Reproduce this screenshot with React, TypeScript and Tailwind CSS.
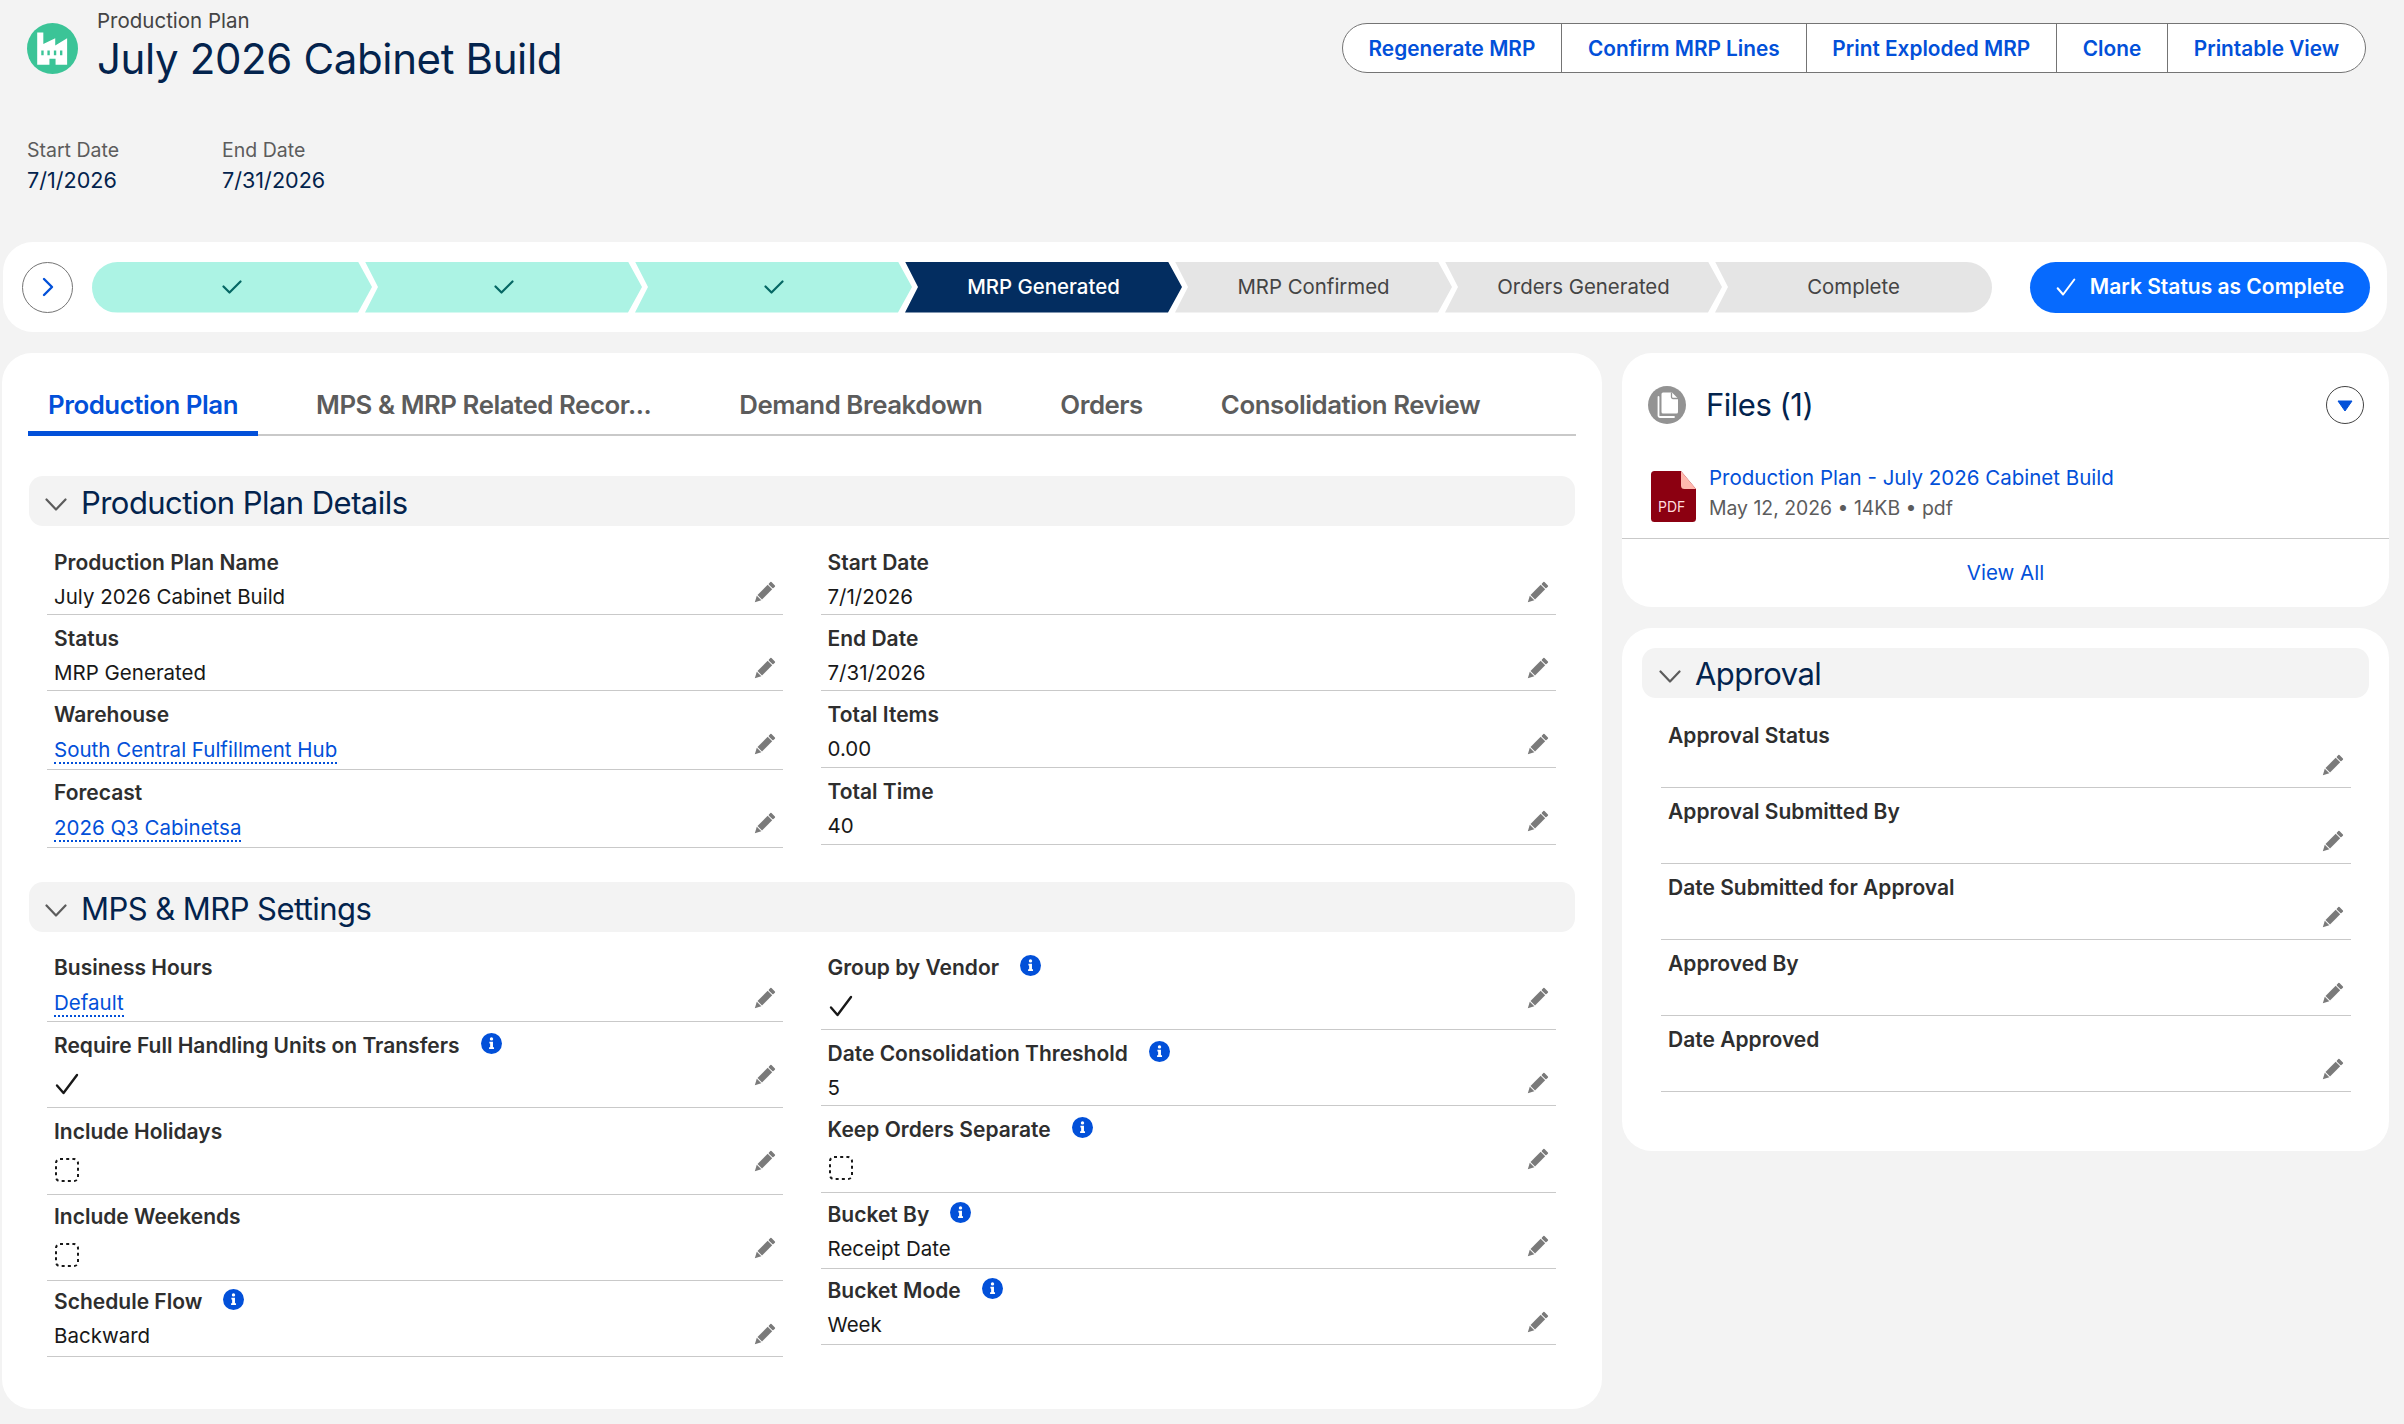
import type { ReactNode } from "react";

type Kind = "text" | "link" | "check" | "empty";

type FieldRow = {
  label: string;
  value?: string;
  kind?: Kind;
  info?: boolean;
  h: string;
  // some labels sit a little higher in their row
  lift?: string;
};

const detailsLeft: FieldRow[] = [
  { label: "Production Plan Name", value: "July 2026 Cabinet Build", h: "h-[76px]" },
  { label: "Status", value: "MRP Generated", h: "h-[76px]" },
  { label: "Warehouse", value: "South Central Fulfillment Hub", kind: "link", h: "h-[79px]" },
  { label: "Forecast", value: "2026 Q3 Cabinetsa", kind: "link", h: "h-[78px]", lift: "-mt-px mb-px" },
];

const detailsRight: FieldRow[] = [
  { label: "Start Date", value: "7/1/2026", h: "h-[76px]" },
  { label: "End Date", value: "7/31/2026", h: "h-[76px]" },
  { label: "Total Items", value: "0.00", h: "h-[77px]" },
  { label: "Total Time", value: "40", h: "h-[77px]" },
];

const settingsLeft: FieldRow[] = [
  { label: "Business Hours", value: "Default", kind: "link", h: "h-[77px]", lift: "-mt-px mb-px" },
  { label: "Require Full Handling Units on Transfers", kind: "check", info: true, h: "h-[86px]" },
  { label: "Include Holidays", kind: "empty", h: "h-[87px]" },
  { label: "Include Weekends", kind: "empty", h: "h-[86px]", lift: "-mt-[2px] mb-[2px]" },
  { label: "Schedule Flow", value: "Backward", info: true, h: "h-[76px]", lift: "-mt-[3px] mb-[1px]" },
];

const settingsRight: FieldRow[] = [
  { label: "Group by Vendor", kind: "check", info: true, h: "h-[85px]", lift: "-mt-px mb-px" },
  { label: "Date Consolidation Threshold", value: "5", info: true, h: "h-[76px]" },
  { label: "Keep Orders Separate", kind: "empty", info: true, h: "h-[87px]" },
  { label: "Bucket By", value: "Receipt Date", info: true, h: "h-[76px]", lift: "-mt-[2px] mb-[2px]" },
  { label: "Bucket Mode", value: "Week", info: true, h: "h-[76px]", lift: "-mt-[2px] mb-[2px]" },
];

const approvalRows = [
  "Approval Status",
  "Approval Submitted By",
  "Date Submitted for Approval",
  "Approved By",
  "Date Approved",
];

const actions = ["Regenerate MRP", "Confirm MRP Lines", "Print Exploded MRP", "Clone", "Printable View"];

const tabs = ["Production Plan", "MPS & MRP Related Recor...", "Demand Breakdown", "Orders", "Consolidation Review"];

function PencilIcon() {
  return (
    <svg viewBox="0 0 24 24" className="h-[24px] w-[24px] shrink-0 fill-[#7a7a7a]">
      <g transform="rotate(45 12 12)">
        <rect x="8.8" y="-1" width="6.4" height="3.6" rx="0.8" />
        <rect x="8.8" y="3.6" width="6.4" height="14.4" />
        <path d="M8.8 19h6.4L12 25z" />
      </g>
    </svg>
  );
}

function InfoIcon() {
  return (
    <svg viewBox="0 0 20 20" className="-mt-[5px] h-[21px] w-[21px] shrink-0">
      <circle cx="10" cy="10" r="10" fill="#0250d9" />
      <circle cx="10" cy="5.6" r="1.6" fill="#fff" />
      <path d="M8 8.4h3.4v5.2h1v1.6H7.7v-1.6h1v-3.6H8z" fill="#fff" />
    </svg>
  );
}

function CheckIcon({ className }: { className: string }) {
  return (
    <svg viewBox="0 0 24 24" fill="none" strokeLinecap="round" strokeLinejoin="round" className={className}>
      <path d="M2 13.5 8.5 21 22 3" stroke="currentColor" strokeWidth="2.4" />
    </svg>
  );
}

function PathCheck() {
  return (
    <svg viewBox="0 0 20 14" fill="none" className="h-[14px] w-[20px]">
      <path d="M1.500 6.500 7.500 12.500 18.500 1.500" stroke="#056764" strokeWidth="2.200" strokeLinecap="round" strokeLinejoin="round" />
    </svg>
  );
}

function DashedBox() {
  return (
    <svg viewBox="0 0 24 24" fill="none" className="ml-px h-[24px] w-[24px]">
      <rect x="1" y="1" width="22" height="22" rx="4" stroke="#181818" strokeWidth="2" strokeDasharray="3 3.200" />
    </svg>
  );
}

function ChevronDown() {
  return (
    <svg viewBox="0 0 22 13" fill="none" className="mt-[7px] h-[13px] w-[22px] shrink-0">
      <path d="M1.500 1.500 11 11.500l9.500-10" stroke="#5c5c5c" strokeWidth="2.200" strokeLinecap="round" strokeLinejoin="round" />
    </svg>
  );
}

function FactoryIcon() {
  return (
    <svg viewBox="0 0 150 150" className="mt-[14px] h-[51px] w-[51px] shrink-0">
      <circle cx="75" cy="75" r="75" fill="#3bc497" />
      <path
        fillRule="evenodd"
        fill="#fff"
        d="M30 28h18v34l35-17v21l35-21v78H84v-18H66v18H30zM42 81v14h7V81zM60 81v14h7V81zM79 81v14h7V81zM97 81v14h7V81z"
      />
    </svg>
  );
}

function FilesIcon() {
  return (
    <svg viewBox="0 0 38 38" className="h-[38px] w-[38px] shrink-0">
      <circle cx="19" cy="19" r="19" fill="#939393" />
      <path d="M15 6.500h9l6 6v13.500a1.500 1.500 0 0 1-1.500 1.500H15a1.500 1.500 0 0 1-1.500-1.500V8a1.500 1.500 0 0 1 1.500-1.500z" fill="#fff" />
      <path d="M23.500 6.500v4.500a1.500 1.500 0 0 0 1.500 1.500h5" fill="none" stroke="#939393" strokeWidth="1.300" />
      <path d="M10.500 11v18.500a1.500 1.500 0 0 0 1.500 1.500h14" fill="none" stroke="#fff" strokeWidth="1.800" strokeLinecap="round" />
    </svg>
  );
}

function PdfIcon() {
  return (
    <svg viewBox="0 0 45 51" className="h-[51px] w-[45px] shrink-0">
      <path d="M3.500 0H30l15 18v29.500a3.500 3.500 0 0 1-3.500 3.500h-38A3.500 3.500 0 0 1 0 47.500v-44A3.500 3.500 0 0 1 3.500 0z" fill="#8c0011" />
      <path d="M30 0l15 18H33.500a3.500 3.500 0 0 1-3.500-3.500z" fill="#ffb8ae" />
      <text x="7" y="41" fill="#ffdcdc" fontSize="14" fontFamily="Inter, sans-serif">
        PDF
      </text>
    </svg>
  );
}

function SectionHeader({ title }: { title: string }) {
  return (
    <div className="flex h-[50px] items-center gap-[14px] rounded-[14px] bg-[#f3f3f3] pl-[16px]">
      <ChevronDown />
      <h2 className="pt-[3px] text-[31px] leading-[40px] tracking-[-0.55px] text-[#03234d]">{title}</h2>
    </div>
  );
}

function FieldValue({ row }: { row: FieldRow }) {
  if (row.kind === "check") {
    return (
      <div className="ml-px mt-[15px] h-[24px] text-[#181818]">
        <CheckIcon className="h-[24px] w-[24px]" />
      </div>
    );
  }
  if (row.kind === "empty") {
    return (
      <div className="mt-[15px] h-[24px]">
        <DashedBox />
      </div>
    );
  }
  if (row.kind === "link") {
    return (
      <div className="mt-[12px] h-[24px] text-[20.5px] leading-[24px]">
        <span className="border-b-2 border-dotted border-[#0250d9] text-[#0250d9]">{row.value}</span>
      </div>
    );
  }
  return <div className="mt-[11px] h-[24px] text-[20.5px] leading-[24px] text-[#181818]">{row.value}</div>;
}

function Field({ row }: { row: FieldRow }) {
  return (
    <div className={`flex justify-between border-b-[1.5px] border-[#c9c9c9] pl-[7px] pr-[7px] pt-[13px] ${row.h}`}>
      <div className="min-w-0">
        <div className={`flex h-[22px] items-center gap-[21px] text-[21px] font-semibold leading-[22px] text-[#2e2e2e] ${row.lift ?? ""}`}>
          <span>{row.label}</span>
          {row.info ? <InfoIcon /> : null}
        </div>
        <FieldValue row={row} />
      </div>
      <div className="mt-[29px]">
        <PencilIcon />
      </div>
    </div>
  );
}

function Section({ title, left, right }: { title: string; left: FieldRow[]; right: FieldRow[] }) {
  return (
    <section>
      <SectionHeader title={title} />
      <div className="ml-[18px] mr-[19px] mt-[13px] grid grid-cols-2 items-start gap-x-[38px]">
        <div>
          {left.map((row) => (
            <Field key={row.label} row={row} />
          ))}
        </div>
        <div>
          {right.map((row) => (
            <Field key={row.label} row={row} />
          ))}
        </div>
      </div>
    </section>
  );
}

function Step({ children, className, width }: { children: ReactNode; className: string; width: string }) {
  return <div className={`flex h-[51px] items-center justify-center text-[20.4px] ${width} ${className}`}>{children}</div>;
}

const midClip = "[clip-path:polygon(0_0,calc(100%-14px)_0,100%_50%,calc(100%-14px)_100%,0_100%,13px_50%)]";

function PathBar() {
  return (
    <div className="flex min-w-0 flex-1">
      <Step width="w-[280px] shrink-0" className="rounded-l-full bg-[#acf3e4] [clip-path:polygon(0_0,calc(100%-14px)_0,100%_50%,calc(100%-14px)_100%,0_100%)]">
        <PathCheck />
      </Step>
      <Step width="-ml-[7px] flex-1" className={`bg-[#acf3e4] ${midClip}`}>
        <PathCheck />
      </Step>
      <Step width="-ml-[7px] flex-1" className={`bg-[#acf3e4] ${midClip}`}>
        <PathCheck />
      </Step>
      <Step width="-ml-[7px] flex-1" className={`bg-[#032d60] font-medium text-white ${midClip}`}>
        MRP Generated
      </Step>
      <Step width="-ml-[7px] flex-1" className={`bg-[#e5e5e5] text-[#444444] ${midClip}`}>
        MRP Confirmed
      </Step>
      <Step width="-ml-[7px] flex-1" className={`bg-[#e5e5e5] text-[#444444] ${midClip}`}>
        Orders Generated
      </Step>
      <Step
        width="-ml-[7px] flex-1"
        className="rounded-r-full bg-[#e5e5e5] text-[#444444] [clip-path:polygon(0_0,100%_0,100%_100%,0_100%,13px_50%)]"
      >
        Complete
      </Step>
    </div>
  );
}

export default function App() {
  return (
    <div className="h-[1424px] w-[2404px] overflow-hidden bg-[#f3f3f3] font-['Inter',sans-serif] antialiased">
      {/* page header */}
      <header className="px-[27px] pt-[9px]">
        <div className="flex items-start justify-between pr-[11px]">
          <div className="flex items-start gap-[19px]">
            <FactoryIcon />
            <div>
              <div className="text-[20.5px] leading-[24px] text-[#444444]">Production Plan</div>
              <h1 className="pt-[1px] text-[42px] leading-[50px] tracking-[-0.37px] text-[#03234d]">July 2026 Cabinet Build</h1>
            </div>
          </div>
          <div className="mt-[14px] flex h-[50px] rounded-full border-[1.5px] border-[#747474] bg-white">
            {actions.map((a, i) => (
              <button
                key={a}
                type="button"
                className={`px-[25.8px] pt-[1px] text-[20.8px] font-semibold text-[#0250d9] ${i > 0 ? "border-l-[1.5px] border-[#747474]" : ""}`}
              >
                {a}
              </button>
            ))}
          </div>
        </div>
        <div className="mt-[54px] flex">
          <div className="w-[195px]">
            <div className="text-[19.5px] leading-[24px] text-[#5c5c5c]">Start Date</div>
            <div className="mt-[4px] text-[21.6px] leading-[28px] text-[#03234d]">7/1/2026</div>
          </div>
          <div>
            <div className="text-[19.5px] leading-[24px] text-[#5c5c5c]">End Date</div>
            <div className="mt-[4px] text-[21.6px] leading-[28px] text-[#03234d]">7/31/2026</div>
          </div>
        </div>
      </header>

      {/* status path */}
      <div className="ml-[3px] mt-[48px] flex h-[90px] w-[2384px] items-center rounded-[30px] bg-white pl-[19px] pr-[17px]">
        <span className="flex h-[51px] w-[51px] shrink-0 items-center justify-center rounded-full border-[1.5px] border-[#747474]">
          <svg viewBox="0 0 12 20" fill="none" className="h-[20px] w-[12px]">
            <path d="M2 2l8 8-8 8" stroke="#0250d9" strokeWidth="2.400" strokeLinecap="round" strokeLinejoin="round" />
          </svg>
        </span>
        <div className="ml-[19px] flex min-w-0 flex-1">
          <PathBar />
        </div>
        <button
          type="button"
          className="ml-[38px] flex h-[51px] w-[340px] shrink-0 items-center justify-center gap-[14px] rounded-full bg-[#066afe] text-[21px] font-semibold text-white"
        >
          <CheckIcon className="h-[20px] w-[20px]" />
          Mark Status as Complete
        </button>
      </div>

      <div className="ml-[2px] mt-[21px] flex items-start gap-[20px]">
        {/* main record panel */}
        <main className="h-[1056px] w-[1600px] shrink-0 rounded-[30px] bg-white pl-[26px] pr-[26px] pt-[21px]">
          <div className="flex gap-[38px] border-b-2 border-[#c9c9c9]">
            {tabs.map((t, i) => (
              <div
                key={t}
                className={
                  i === 0
                    ? "-mb-[2px] flex h-[62px] items-center whitespace-nowrap border-b-[5px] border-[#0250d9] px-[20px] pt-[5px] text-[25.8px] font-semibold tracking-[-0.45px] text-[#0250d9]"
                    : i === 1
                      ? "flex h-[60px] items-center whitespace-nowrap pl-[20px] pr-[30px] pt-[3px] text-[25.8px] font-semibold tracking-[-0.45px] text-[#5c5c5c]"
                      : "flex h-[60px] items-center whitespace-nowrap px-[20px] pt-[3px] text-[25.8px] font-semibold tracking-[-0.45px] text-[#5c5c5c]"
                }
              >
                {t}
              </div>
            ))}
          </div>
          <div className="mt-[40px] flex flex-col gap-[34px] px-px">
            <Section title="Production Plan Details" left={detailsLeft} right={detailsRight} />
            <Section title="MPS & MRP Settings" left={settingsLeft} right={settingsRight} />
          </div>
        </main>

        <aside className="flex w-[767px] shrink-0 flex-col gap-[21px]">
          {/* files */}
          <div className="flex h-[254px] flex-col rounded-[30px] bg-white pt-[32px]">
            <div className="flex items-center justify-between pl-[26px] pr-[25px]">
              <div className="flex items-center gap-[20px]">
                <FilesIcon />
                <h2 className="pt-[1px] text-[31px] leading-[38px] tracking-[-0.5px] text-[#03234d]">Files (1)</h2>
              </div>
              <span className="flex h-[38px] w-[38px] items-center justify-center rounded-full border-[1.5px] border-[#444444]">
                <svg viewBox="0 0 16 12" className="mt-[2px] h-[12px] w-[16px]">
                  <path d="M1 1h14L8 11z" fill="#0250d9" stroke="#0250d9" strokeLinejoin="round" />
                </svg>
              </span>
            </div>
            <div className="mt-[47px] flex items-start gap-[13px] pl-[29px]">
              <PdfIcon />
              <div className="-mt-[5px]">
                <div className="text-[20.5px] leading-[24px] text-[#0250d9]">Production Plan - July 2026 Cabinet Build</div>
                <div className="mt-[6px] text-[19.4px] leading-[24px] text-[#5c5c5c]">May 12, 2026 • 14KB • pdf</div>
              </div>
            </div>
            <div className="mt-[16px] flex flex-1 items-center justify-center border-t-[1.5px] border-[#c9c9c9] text-[20.5px] text-[#0250d9]">
              View All
            </div>
          </div>

          {/* approval */}
          <div className="h-[523px] rounded-[30px] bg-white px-[20px] pt-[20px]">
            <div className="flex h-[50px] items-center gap-[14px] rounded-[14px] bg-[#f3f3f3] pl-[17px]">
              <ChevronDown />
              <h2 className="pt-[2px] text-[31px] leading-[40px] tracking-[-0.55px] text-[#03234d]">Approval</h2>
            </div>
            <div className="ml-[19px] mr-[18px] mt-[14px]">
              {approvalRows.map((label) => (
                <Field key={label} row={{ label, value: "", h: "h-[76px]" }} />
              ))}
            </div>
          </div>
        </aside>
      </div>
    </div>
  );
}
